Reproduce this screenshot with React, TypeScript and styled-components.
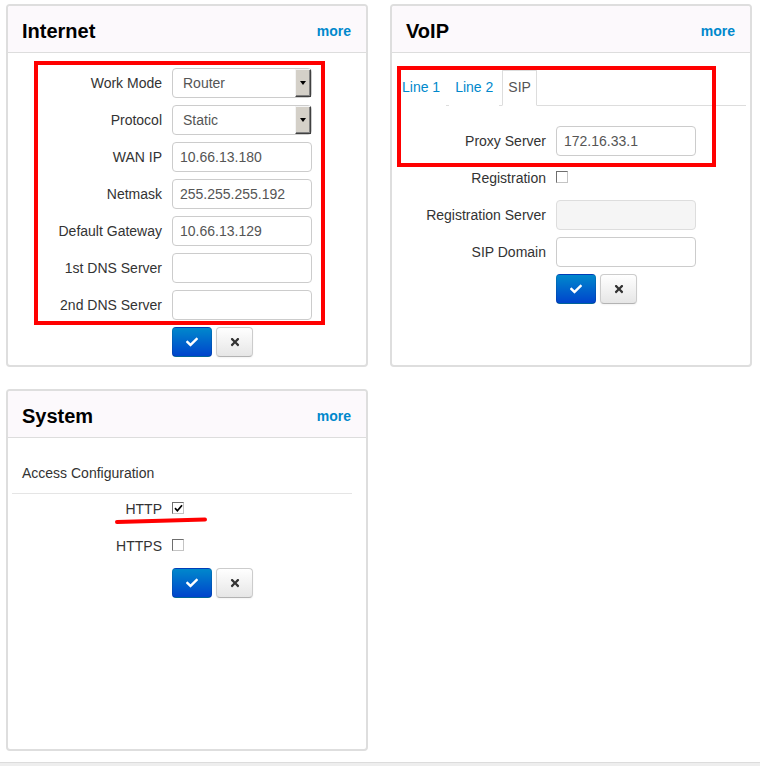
import React from "react";
import styled, { createGlobalStyle } from "styled-components";
import { FaCheck, FaTimes } from "react-icons/fa";

const GlobalStyle = createGlobalStyle`
  html, body { margin: 0; padding: 0; background: #fff; }
  body {
    font-family: "Liberation Sans", Arial, sans-serif;
    font-size: 14px;
    color: #333;
  }
`;

const Page = styled.div`
  width: 760px;
`;

const Grid = styled.div`
  display: grid;
  grid-template-columns: 362px 362px;
  grid-template-rows: 363px 362px;
  column-gap: 22px;
  row-gap: 22px;
  margin: 4px 0 0 6px;
`;

const Panel = styled.section`
  position: relative;
  box-sizing: border-box;
  border: 2px solid #dedede;
  border-radius: 4px;
  background: #fff;
  display: flex;
  flex-direction: column;
`;

const PanelHeader = styled.header`
  box-sizing: border-box;
  height: 47px;
  border-bottom: 1px solid #dddddd;
  background: #fcf9fc;
  display: flex;
  align-items: center;
  justify-content: space-between;
  padding: 4px 15px 0 14px;
  border-radius: 2px 2px 0 0;
`;

const Title = styled.h2`
  margin: 0;
  font-size: 20px;
  font-weight: bold;
  color: #000;
`;

const More = styled.a`
  font-size: 14px;
  font-weight: bold;
  color: #0088cc;
  text-decoration: none;
  cursor: pointer;
`;

const PanelBody = styled.div<{ $top: number }>`
  padding: ${(p) => p.$top}px 6px 8px;
`;

const Row = styled.div`
  display: flex;
  align-items: center;
  height: 30px;
  margin-bottom: 7px;
`;

const Label = styled.label`
  width: 148px;
  margin-right: 10px;
  text-align: right;
  white-space: nowrap;
  color: #333;
`;

const TextInput = styled.input`
  box-sizing: border-box;
  width: 140px;
  height: 30px;
  border: 1px solid #cccccc;
  border-radius: 4px;
  padding: 0 7px;
  font-family: inherit;
  font-size: 14px;
  color: #555;
  background: #fff;
  outline: none;
  &:disabled {
    background: #f5f5f5;
    border-color: #dddddd;
  }
`;

const SelectBox = styled.div`
  box-sizing: border-box;
  width: 140px;
  height: 30px;
  border: 1px solid #cccccc;
  border-radius: 4px;
  display: flex;
  align-items: center;
  justify-content: space-between;
  padding-left: 10px;
  color: #555;
  background: #fff;
`;

const SelectArrow = styled.span`
  box-sizing: border-box;
  align-self: stretch;
  width: 16px;
  background: #d4d0c8;
  border: 1px solid;
  border-color: #f4f4f4 #404040 #404040 #f4f4f4;
  box-shadow: inset -1px -1px 0 #808080;
  display: flex;
  align-items: center;
  justify-content: center;
  &::after {
    content: "";
    width: 0;
    height: 0;
    border-left: 3.5px solid transparent;
    border-right: 3.5px solid transparent;
    border-top: 4px solid #000;
  }
`;

const CheckBox = styled.span`
  box-sizing: border-box;
  width: 12px;
  height: 12px;
  margin-top: -2px;
  border: 1px solid;
  border-color: #6e6e6e #c4c4c4 #c4c4c4 #6e6e6e;
  background: #fff;
  display: inline-flex;
  align-items: center;
  justify-content: center;
`;

const Actions = styled.div`
  display: flex;
  gap: 4px;
  padding-left: 158px;
`;

const PrimaryButton = styled.button`
  box-sizing: border-box;
  width: 40px;
  height: 30px;
  border-radius: 4px;
  border: 1px solid;
  border-color: rgba(0, 0, 0, 0.1) rgba(0, 0, 0, 0.1) rgba(0, 0, 0, 0.25);
  background: linear-gradient(#0088cc, #0044cc);
  color: #fff;
  display: flex;
  align-items: center;
  justify-content: center;
  padding: 0;
  cursor: pointer;
`;

const DefaultButton = styled.button`
  box-sizing: border-box;
  width: 37px;
  height: 30px;
  border-radius: 4px;
  border: 1px solid #cccccc;
  border-bottom-color: #b3b3b3;
  background: linear-gradient(#ffffff, #e6e6e6);
  box-shadow: inset 0 1px 0 rgba(255, 255, 255, 0.2), 0 1px 2px rgba(0, 0, 0, 0.05);
  color: #333;
  display: flex;
  align-items: center;
  justify-content: center;
  padding: 0;
  cursor: pointer;
`;

const Tabs = styled.ul`
  list-style: none;
  margin: 2px -2px 20px;
  padding: 0;
  display: flex;
  border-bottom: 1px solid #dddddd;
`;

const Tab = styled.li<{ $active?: boolean }>`
  height: 34px;
  line-height: 33px;
  padding: 0 5px;
  margin-right: 3px;
  margin-bottom: -1px;
  border: 1px solid ${(p) => (p.$active ? "#dddddd" : "transparent")};
  border-bottom-color: ${(p) => (p.$active ? "#fff" : "transparent")};
  background: #fff;
  color: ${(p) => (p.$active ? "#555" : "#0088cc")};
  cursor: pointer;
`;

const Legend = styled.div`
  margin: 0 8px 0 -2px;
  padding-left: 10px;
  line-height: 40px;
  border-bottom: 1px solid #e5e5e5;
  color: #333;
`;

const Annotation = styled.div<{ $x: number; $y: number; $w: number; $h: number }>`
  position: absolute;
  left: ${(p) => p.$x}px;
  top: ${(p) => p.$y}px;
  width: ${(p) => p.$w}px;
  height: ${(p) => p.$h}px;
  box-sizing: border-box;
  border: 4px solid #ff0000;
  pointer-events: none;
`;

const Underline = styled.svg`
  position: absolute;
  left: 106px;
  top: 125px;
  pointer-events: none;
`;

const Footer = styled.footer`
  margin-top: 11px;
  height: 20px;
  border-top: 1px solid #dcdcdc;
  background: #eeeeee;
`;

const Select = ({ value }: { value: string }) => (
  <SelectBox>
    <span>{value}</span>
    <SelectArrow />
  </SelectBox>
);

const Check = ({ checked }: { checked?: boolean }) => (
  <CheckBox>
    {checked && (
      <svg width="9" height="9" viewBox="0 0 9 9">
        <path d="M1 4.2 L3.4 6.8 L8 1.2" fill="none" stroke="#000" strokeWidth="1.7" />
      </svg>
    )}
  </CheckBox>
);

const ButtonPair = () => (
  <Actions>
    <PrimaryButton aria-label="apply">
      <FaCheck size={12} />
    </PrimaryButton>
    <DefaultButton aria-label="cancel">
      <FaTimes size={12} />
    </DefaultButton>
  </Actions>
);

const Header = ({ title }: { title: string }) => (
  <PanelHeader>
    <Title>{title}</Title>
    <More>more</More>
  </PanelHeader>
);

export default function App() {
  return (
    <Page>
      <GlobalStyle />
      <Grid>
        <Panel>
          <Header title="Internet" />
          <PanelBody $top={15}>
            <Row>
              <Label>Work Mode</Label>
              <Select value="Router" />
            </Row>
            <Row>
              <Label>Protocol</Label>
              <Select value="Static" />
            </Row>
            <Row>
              <Label>WAN IP</Label>
              <TextInput defaultValue="10.66.13.180" />
            </Row>
            <Row>
              <Label>Netmask</Label>
              <TextInput defaultValue="255.255.255.192" />
            </Row>
            <Row>
              <Label>Default Gateway</Label>
              <TextInput defaultValue="10.66.13.129" />
            </Row>
            <Row>
              <Label>1st DNS Server</Label>
              <TextInput defaultValue="" />
            </Row>
            <Row>
              <Label>2nd DNS Server</Label>
              <TextInput defaultValue="" />
            </Row>
            <ButtonPair />
          </PanelBody>
          <Annotation $x={26} $y={55} $w={291} $h={264} />
        </Panel>

        <Panel>
          <Header title="VoIP" />
          <PanelBody $top={15}>
            <Tabs>
              <Tab>Line 1</Tab>
              <Tab>Line 2</Tab>
              <Tab $active>SIP</Tab>
            </Tabs>
            <Row>
              <Label>Proxy Server</Label>
              <TextInput defaultValue="172.16.33.1" />
            </Row>
            <Row>
              <Label>Registration</Label>
              <Check />
            </Row>
            <Row>
              <Label>Registration Server</Label>
              <TextInput disabled defaultValue="" />
            </Row>
            <Row>
              <Label>SIP Domain</Label>
              <TextInput defaultValue="" />
            </Row>
            <ButtonPair />
          </PanelBody>
          <Annotation $x={5} $y={60} $w={319} $h={101} />
        </Panel>

        <Panel>
          <Header title="System" />
          <PanelBody $top={15}>
            <Legend>Access Configuration</Legend>
            <Row>
              <Label>HTTP</Label>
              <Check checked />
            </Row>
            <Row>
              <Label>HTTPS</Label>
              <Check />
            </Row>
            <ButtonPair />
          </PanelBody>
          <Underline width="96" height="10" viewBox="0 0 96 10">
            <path d="M3 6 L91 3.6" stroke="#ff0000" strokeWidth="4" strokeLinecap="round" fill="none" />
          </Underline>
        </Panel>
      </Grid>
      <Footer />
    </Page>
  );
}
